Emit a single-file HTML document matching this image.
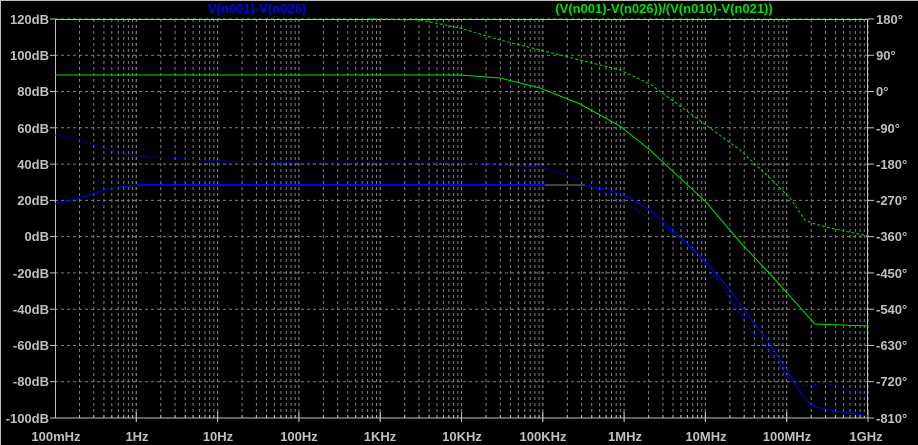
<!DOCTYPE html>
<html><head><meta charset="utf-8"><style>
html,body{margin:0;padding:0;background:#000;width:918px;height:445px;overflow:hidden}
svg{display:block}
text{font-family:"Liberation Sans",sans-serif;font-weight:bold;font-size:13px}
.l{fill:#c0c0c0;text-anchor:end}
.r{fill:#c0c0c0;text-anchor:start}
.b{fill:#c0c0c0;text-anchor:middle}
</style></head><body>
<svg id="s" width="918" height="445" viewBox="0 0 918 445">
<rect x="0" y="0" width="918" height="445" fill="#000"/>
<line x1="0" y1="0.5" x2="918" y2="0.5" stroke="#c0c0c0"/>
<line x1="0.5" y1="0" x2="0.5" y2="445" stroke="#c0c0c0"/>
<g id="grid"></g>
<line x1="55" y1="19" x2="868" y2="19" stroke="#00e000" stroke-dasharray="3,3"/>
<rect x="55.5" y="19.5" width="812" height="398.5" fill="none" stroke="#c0c0c0"/>
<!-- curves -->
<polyline fill="none" stroke="#00e000" stroke-width="1" points="55,75 460,75 500,78 540,88 580,104 620,126 650,150 680,178 706,202 740,242 770,274 788,294 815,324 868,326"/>
<polyline fill="none" stroke="#00e000" stroke-width="1" stroke-dasharray="3,2" points="370,19 420,20 460,28 500,40 540,50 580,60 620,70 650,84 680,106 706,125 740,150 770,178 790,198 805,220 815,224 830,228 868,236"/>
<polyline fill="none" stroke="#0000ff" stroke-width="1" points="55,204 80,198 110,188 137,185"/>
<line x1="137" y1="185" x2="545" y2="185" stroke="#0000ff" stroke-width="2"/>
<polyline fill="none" stroke="#808080" stroke-width="1" points="545,185 585,185"/>
<polyline fill="none" stroke="#0000ff" stroke-width="1" points="585,186 610,190 630,198 650,210 670,228 690,246 706,262 730,290 750,318 770,344 788,372 800,392 812,406 830,410 850,413 868,416"/>
<polyline fill="none" stroke="#0000ff" stroke-width="1" stroke-dasharray="2,2" points="55,135 80,140 110,150 137,156 200,160 300,163 460,163 540,167 575,178 610,195 640,212 670,230 700,256 725,290 750,330 775,358 790,381 805,386 825,383 840,387 868,395"/>
<!-- titles -->
<text x="257" y="13" fill="#0000ff" text-anchor="middle">V(n001)-V(n026)</text>
<text x="664" y="13" fill="#00e000" text-anchor="middle">(V(n001)-V(n026))/(V(n010)-V(n021))</text>
<!-- left labels -->
<text class="l" x="49" y="24">120dB</text>
<text class="l" x="49" y="60">100dB</text>
<text class="l" x="49" y="96">80dB</text>
<text class="l" x="49" y="133">60dB</text>
<text class="l" x="49" y="169">40dB</text>
<text class="l" x="49" y="205">20dB</text>
<text class="l" x="49" y="241">0dB</text>
<text class="l" x="49" y="278">-20dB</text>
<text class="l" x="49" y="314">-40dB</text>
<text class="l" x="49" y="350">-60dB</text>
<text class="l" x="49" y="386">-80dB</text>
<text class="l" x="49" y="423">-100dB</text>
<!-- right labels -->
<text class="r" x="876" y="24">180°</text>
<text class="r" x="876" y="60">90°</text>
<text class="r" x="876" y="96">0°</text>
<text class="r" x="876" y="133">-90°</text>
<text class="r" x="876" y="169">-180°</text>
<text class="r" x="876" y="205">-270°</text>
<text class="r" x="876" y="241">-360°</text>
<text class="r" x="876" y="278">-450°</text>
<text class="r" x="876" y="314">-540°</text>
<text class="r" x="876" y="350">-630°</text>
<text class="r" x="876" y="386">-720°</text>
<text class="r" x="876" y="423">-810°</text>
<!-- bottom labels -->
<text class="b" x="56" y="441">100mHz</text>
<text class="b" x="137" y="441">1Hz</text>
<text class="b" x="218" y="441">10Hz</text>
<text class="b" x="299" y="441">100Hz</text>
<text class="b" x="380" y="441">1KHz</text>
<text class="b" x="462" y="441">10KHz</text>
<text class="b" x="543" y="441">100KHz</text>
<text class="b" x="625" y="441">1MHz</text>
<text class="b" x="706" y="441">10MHz</text>
<text class="b" x="787" y="441">100MHz</text>
<text class="b" x="866" y="441">1GHz</text>
</svg>
<script>
(function(){
var g=document.getElementById('grid'),ns='http://www.w3.org/2000/svg',h='';
var x0=55,d=81.3,top=19,bot=418,dy=(bot-top)/11;
for(var k=0;k<10;k++){for(var m=1;m<=10;m++){
 var x=x0+d*(k+Math.log10(m));if(m==1&&k==0)continue;
 h+='<line x1="'+x.toFixed(1)+'" y1="'+top+'" x2="'+x.toFixed(1)+'" y2="'+bot+'" stroke="#808080" stroke-dasharray="3,3"/>';
 var tl=(m==1||m==10)?6:3;
 h+='<line x1="'+x.toFixed(1)+'" y1="'+(bot-tl)+'" x2="'+x.toFixed(1)+'" y2="'+(bot+(m==10||m==1?4:0))+'" stroke="#c0c0c0"/>';
}}
for(var i=1;i<11;i++){var y=(top+dy*i).toFixed(1);
 h+='<line x1="'+x0+'" y1="'+y+'" x2="868" y2="'+y+'" stroke="#808080" stroke-dasharray="3,3"/>';}
for(var i=0;i<12;i++){var y=(top+dy*i).toFixed(1);
 h+='<line x1="50" y1="'+y+'" x2="55" y2="'+y+'" stroke="#c0c0c0"/>';
 h+='<line x1="868" y1="'+y+'" x2="874" y2="'+y+'" stroke="#c0c0c0"/>';}
g.innerHTML=h;
})();
</script>
</body></html>
